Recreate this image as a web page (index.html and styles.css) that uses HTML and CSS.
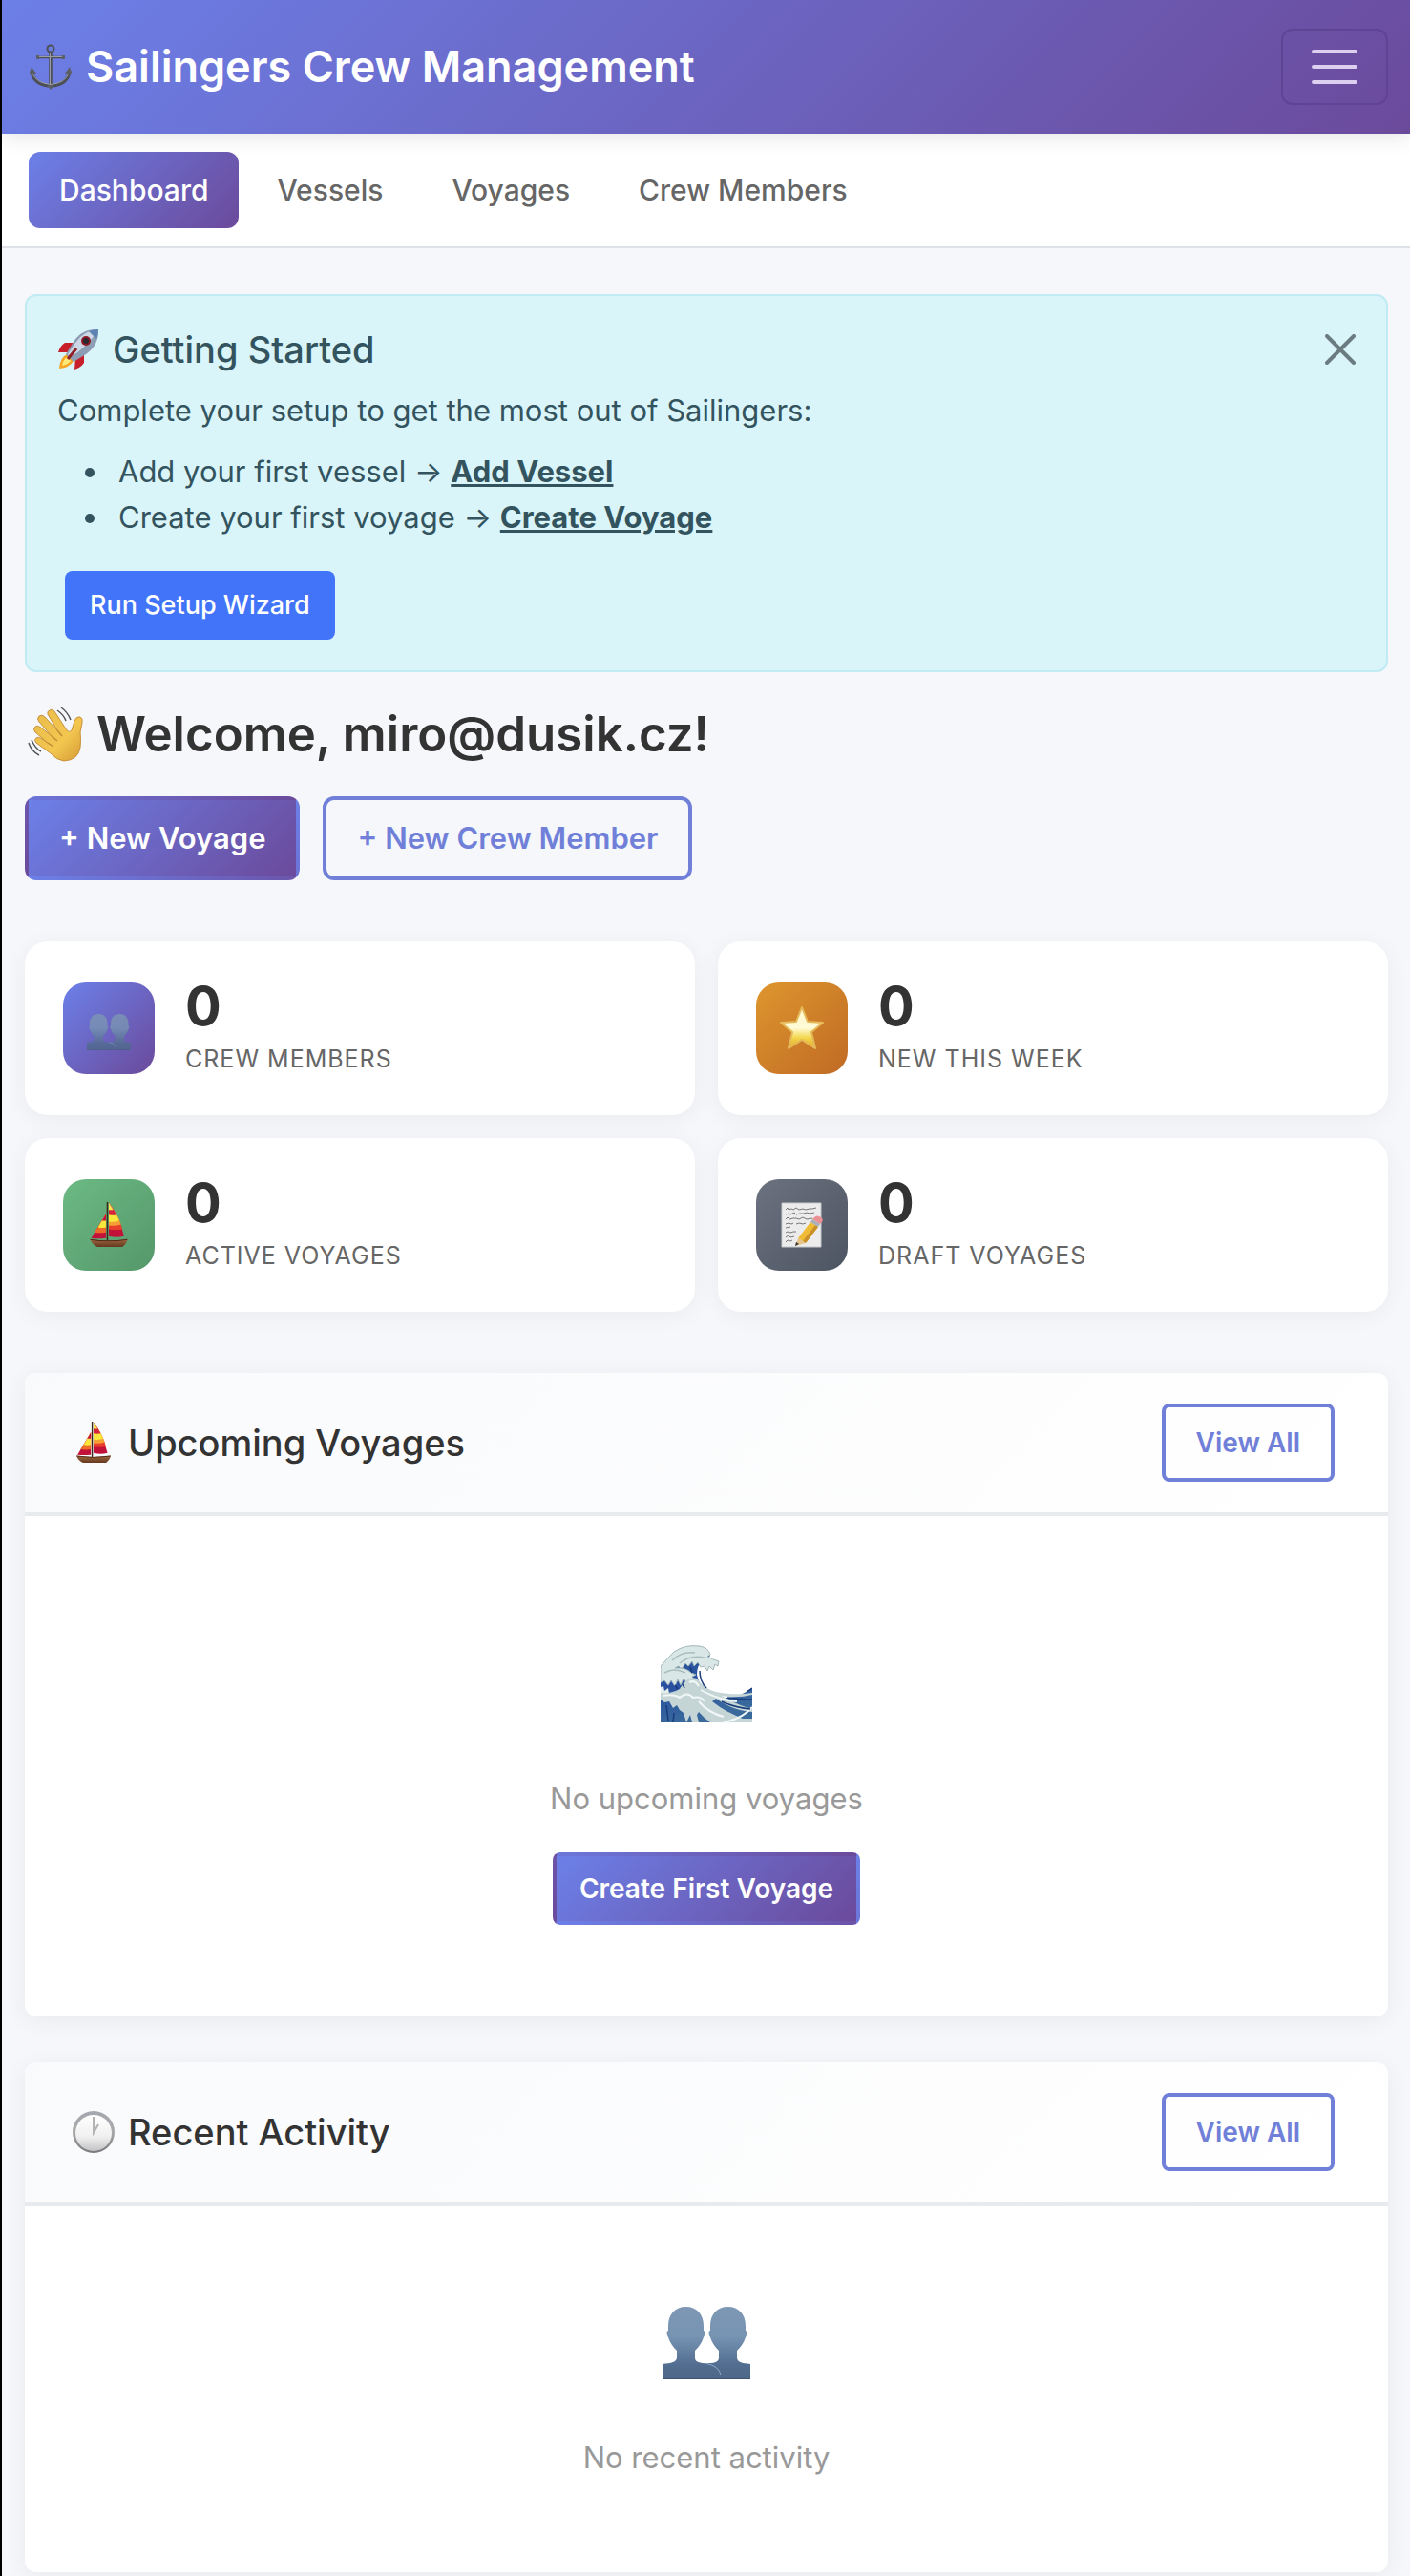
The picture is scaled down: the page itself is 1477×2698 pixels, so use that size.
FILE: index.html
```
<!DOCTYPE html>
<html lang="en">
<head>
  <meta charset="UTF-8">
  <meta name="viewport" content="width=device-width, initial-scale=1.0">
  <title>Sailingers Crew Management</title>
  <link rel="stylesheet" href="styles.css">
</head>
<body>
  <!-- Shared icons -->
  <svg class="icon-defs" aria-hidden="true">
    <defs>
      <linearGradient id="people-fill" x1="0" y1="0" x2="0" y2="76" gradientUnits="userSpaceOnUse">
        <stop offset="0" stop-color="#7d97b4"/>
        <stop offset="0.4" stop-color="#7894b3"/>
        <stop offset="0.8" stop-color="#526d90"/>
        <stop offset="1" stop-color="#4e6788"/>
      </linearGradient>
      <linearGradient id="hull-fill" x1="0" y1="0" x2="0" y2="1">
        <stop offset="0" stop-color="#a06a42"/>
        <stop offset="1" stop-color="#64371d"/>
      </linearGradient>
    </defs>
    <symbol id="icon-people" viewBox="0 0 92 76">
      <path fill="url(#people-fill)" d="M68.500 0C57 0 50 8 50 20V25C48 25 48 29 50 32C52 38 55 42 59 46V53C59 57 56 59 48 59L40 60V76H92V60C83 59 78 58 78 53V46C82 42 85 38 87 32C89 29 89 25 87 25V20C87 8 80 0 68.500 0Z"/>
      <path fill="url(#people-fill)" d="M24.500 0C13 0 6 8 6 20V25C4 25 4 29 6 32C8 38 11 42 15 46V53C15 58 9 59 0 60V76H61C61 67 54 60 42 59C35 58 34 56 34 53V46C38 42 41 38 43 32C45 29 45 25 43 25V20C43 8 36 0 24.500 0Z"/>
      <path d="M46 59.500C54 61 60 65 61 72" fill="none" stroke="#8fb0cc" stroke-width="1"/>
      <path d="M0 75.500H92" stroke="#3f5674" stroke-width="1"/>
    </symbol>
    <symbol id="icon-boat" viewBox="0 0 40 47">
      <path fill="#c3123a" d="M17 12L2 37Q8 38 17 37Z"/>
      <path fill="#f06a28" d="M17 12L5.500 31Q11 32 17 31Z"/>
      <path fill="#fae73c" d="M17 12L9 26Q13 27 17 26Z"/>
      <path fill="#c3123a" d="M17 12L13 19H17Z"/>
      <path fill="#c3123a" d="M20 1Q31 16 35.500 35Q28 37 20 35Z"/>
      <path fill="#e8402c" d="M20 1Q30 14 34 28Q27 29 20 28Z"/>
      <path fill="#f5a034" d="M20 1Q29 12 32.500 23Q26 25 20 24Z"/>
      <path fill="#fae73c" d="M20 1Q28 12 30.500 19Q25 21 20 20Z"/>
      <path fill="#d5233c" d="M20 1Q25 7 28 13Q24 14 20 13Z"/>
      <path fill="#f7ea50" d="M20 1L24.500 8H20Z"/>
      <path d="M18.500 0V42" stroke="#3a2a1c" stroke-width="1.500"/>
      <path fill="url(#hull-fill)" d="M1 38Q19 41 39 38Q39 42 34 46H8Q2 43 1 38Z"/>
      <path d="M1 38.500Q19 41.500 39 38.500" fill="none" stroke="#4d2b17" stroke-width="1"/>
    </symbol>
  </svg>

  <!-- Header section -->
  <header class="topbar">
    <a href="#" class="brand">
      <svg class="brand-icon" viewBox="0 0 44 48" aria-hidden="true">
        <g fill="none" stroke="#4c4f55" stroke-width="3.500">
          <circle cx="22" cy="5" r="3.500" stroke-width="2"/>
          <path d="M22 9V45"/>
          <path d="M8 14H36" stroke-width="2.500"/>
          <path d="M2 28Q4 43 22 44Q40 43 42 28"/>
        </g>
        <g fill="none" stroke="#9a9da3" stroke-width="1">
          <path d="M21.500 9V43M9 13.500H35M3 31Q7 41 22 42.500Q37 41 41 31"/>
        </g>
        <path fill="#5b5e64" d="M0 31L2 24L7 31ZM44 31L42 24L37 31ZM18 43H26L22 48ZM7 12h3v4H7zM34 12h3v4h-3z"/>
      </svg>
      <span>Sailingers Crew Management</span>
    </a>
    <button type="button" class="menu-toggle" aria-label="Toggle navigation">
      <svg viewBox="0 0 60 60" aria-hidden="true">
        <path d="M8 14H52M8 30H52M8 46H52"/>
      </svg>
    </button>
  </header>

  <nav class="tabs">
    <a href="#" class="tab active">Dashboard</a>
    <a href="#" class="tab">Vessels</a>
    <a href="#" class="tab">Voyages</a>
    <a href="#" class="tab">Crew Members</a>
  </nav>

  <main>
    <!-- Onboarding -->
    <section class="alert">
      <button type="button" class="alert-close" aria-label="Close">
        <svg viewBox="0 0 32 32" aria-hidden="true"><path d="M2 2L30 30M30 2L2 30"/></svg>
      </button>
      <h2 class="heading">
        <svg class="heading-icon" viewBox="0 0 44 44" aria-hidden="true">
          <path fill="#c8202b" d="M17 15L8 15Q3 18 1 25L12 25ZM28 27L28 36Q25 41 18 43L19 31Z"/>
          <path fill="#f5a623" d="M10 27Q3 30 2 42Q13 41 17 34Z"/>
          <path fill="#fce97a" d="M11 30Q6 32 5 39Q11 38 14 34Z"/>
          <path fill="#8d9db4" d="M43 1Q26 0 17 14L9 27L17 35L30 27Q44 17 43 1Z"/>
          <path fill="#cdd8e6" d="M43 1Q28 2 19 15L11 27L14 30Q32 19 43 1Z"/>
          <path fill="#5d83b4" d="M43 1Q37 1 33 3L41 11Q43 6 43 1Z"/>
          <circle cx="30" cy="13" r="5" fill="#8e1a24"/>
          <circle cx="30" cy="13" r="3" fill="#2b2730"/>
          <path d="M20 21L11 32" stroke="#8f2028" stroke-width="3"/>
        </svg>
        Getting Started
      </h2>
      <p>Complete your setup to get the most out of Sailingers:</p>
      <ul>
        <li>Add your first vessel → <a href="#">Add Vessel</a></li>
        <li>Create your first voyage → <a href="#">Create Voyage</a></li>
      </ul>
      <button type="button" class="btn-small btn-setup">Run Setup Wizard</button>
    </section>

    <h1 class="welcome">
      <svg viewBox="0 0 60 60" aria-hidden="true">
        <defs>
          <linearGradient id="hand-fill" x1="0" y1="0" x2="1" y2="1">
            <stop offset="0" stop-color="#e9bd4b"/>
            <stop offset="0.6" stop-color="#f3c650"/>
            <stop offset="1" stop-color="#d39a32"/>
          </linearGradient>
        </defs>
        <path fill="url(#hand-fill)" stroke="#c8913a" stroke-width="1" d="M38 58Q30 57 24 50L9 39Q6 36 9 34Q11 32 15 35L21 39L8 28Q5 25 8 22Q10 20 14 23L25 32L12 17Q9 14 12 11Q15 9 18 12L31 26L21 9Q20 6 23 5Q26 3 28 6L41 26Q44 29 46 26L49 16Q51 11 55 12Q58 13 57 18L55 28Q56 35 55 44Q53 57 38 58Z"/>
        <path d="M21 39L27 43M25 32L31 37M31 26L36 32" stroke="#c08a35" stroke-width="1.500"/>
        <path d="M35 2Q42 7 45 15M31 5Q38 10 40 16M1 39Q4 48 12 52M4 36Q8 45 14 48" fill="none" stroke="#55575b" stroke-width="1.500"/>
      </svg>
      Welcome, miro@dusik.cz!
    </h1>
    <div class="actions">
      <a href="#" class="btn btn-primary">+ New Voyage</a>
      <a href="#" class="btn btn-outline">+ New Crew Member</a>
    </div>

    <!-- Stats -->
    <div class="stats">
      <div class="stat-card">
        <div class="stat-icon purple">
          <svg class="stat-people" aria-hidden="true"><use href="#icon-people"/></svg>
        </div>
        <div>
          <div class="stat-number">0</div>
          <div class="stat-label">Crew Members</div>
        </div>
      </div>
      <div class="stat-card">
        <div class="stat-icon orange">
          <svg viewBox="0 0 48 48" aria-hidden="true">
            <defs>
              <linearGradient id="star-fill" x1="0" y1="0" x2="0" y2="1">
                <stop offset="0" stop-color="#fff8cc"/>
                <stop offset="0.5" stop-color="#fffbd8"/>
                <stop offset="0.75" stop-color="#f3d64a"/>
                <stop offset="1" stop-color="#dfa12c"/>
              </linearGradient>
            </defs>
            <path fill="url(#star-fill)" stroke="#e5b95a" stroke-width="2" stroke-linejoin="round" d="M24 2L30 17L46 18L34 28L38 45L24 36L10 45L14 28L2 18L18 17Z"/>
          </svg>
        </div>
        <div>
          <div class="stat-number">0</div>
          <div class="stat-label">New This Week</div>
        </div>
      </div>
      <div class="stat-card">
        <div class="stat-icon green">
          <svg aria-hidden="true"><use href="#icon-boat"/></svg>
        </div>
        <div>
          <div class="stat-number">0</div>
          <div class="stat-label">Active Voyages</div>
        </div>
      </div>
      <div class="stat-card">
        <div class="stat-icon gray">
          <svg viewBox="0 0 48 48" aria-hidden="true">
            <path fill="#ececec" stroke="#c6c8cb" stroke-width="1" d="M3 1H44V47H3Z"/>
            <path fill="none" stroke="#777" stroke-width="1" d="M7 8l2-2 1 2 3-1 2 1 3-2 3 2 4-1 3 1 4-1 3 0 4-1M7 13l3-1 2 1 4-2 2 2 4-1 4 0 3-1 3 1 5-1M7 18l2-2 2 2 4-1 3 0 3 1 4-2 4 2 6-1M7 23l3-1 3 1 2-1M18 23l3-1 4 1 3-1M7 27l5-1M7 32l2-1 3 1 3-1 3 0M7 37l3-2 2 2 4-1M7 42l2-2 3 1 2-1"/>
            <path fill="#f0bc35" d="M33 21L41 26L28 43L20 38Z"/>
            <path fill="#c9902a" d="M38 24L41 26L28 43L25 41Z"/>
            <path fill="#a9b0b8" d="M35 18L43 23L41 26L33 21Z"/>
            <path fill="#e99095" d="M37 16Q40 13 44 16Q47 18 45 21L43 23L35 18Z"/>
            <path fill="#e6c48c" d="M20 38L28 43L17 46Z"/>
            <path fill="#333" d="M18 42L21 44L17 46Z"/>
          </svg>
        </div>
        <div>
          <div class="stat-number">0</div>
          <div class="stat-label">Draft Voyages</div>
        </div>
      </div>
    </div>

    <!-- Voyages -->
    <section class="card">
      <div class="card-header">
        <h2 class="heading">
          <svg class="heading-icon" aria-hidden="true"><use href="#icon-boat"/></svg>
          Upcoming Voyages
        </h2>
        <a href="#" class="btn-small btn-outline">View All</a>
      </div>
      <div class="empty empty-voyages">
        <svg class="empty-icon" viewBox="0 0 96 96" aria-hidden="true">
          <defs>
            <linearGradient id="sea-fill" x1="0" y1="0" x2="0.300" y2="1">
              <stop offset="0" stop-color="#315f9e"/>
              <stop offset="0.500" stop-color="#2950a0"/>
              <stop offset="1" stop-color="#3a6a9c"/>
            </linearGradient>
          </defs>
          <path fill="url(#sea-fill)" d="M0 30Q14 10 36 9Q48 7 52 18L46 24Q38 26 38 38Q42 56 58 62Q80 64 96 52V88H0Z"/>
          <!-- crest -->
          <path fill="#d9e7e6" stroke="#a3b7bb" stroke-width="1" d="M0 29Q8 20 14 14Q26 6 40 8Q50 9 52 17L49 19Q54 22 61 24L60 29L57 27L55 33L51 29L49 34L46 29L42 30L39 25L35 29L33 24L29 29L26 26L22 32L19 29L15 31Q26 30 32 36L37 38L33 40L35 45L29 42L28 47L24 42L21 49L18 43L15 50L11 44L8 49L4 44L0 46Z"/>
          <path fill="none" stroke="#a9bdbd" stroke-width="1.500" d="M12 23Q22 13 36 15M20 26Q30 17 46 20M4 36Q14 30 26 36"/>
          <path fill="#e4eeec" d="M0 51L3 50L4 55L8 52L9 58L6 59L8 64L0 60Z"/>
          <!-- inner swell -->
          <path fill="#c5d5d6" d="M0 57Q12 58 20 53Q28 38 38 42Q46 53 58 56Q78 60 96 57V59Q80 63 64 60Q80 70 96 74V77Q74 75 58 63L54 66Q66 76 86 84L96 84V88H52Q46 84 40 77L38 80L40 88H33L31 80L27 88L24 78L20 75L17 70L13 73L9 66L4 67L0 64Z"/>
          <path fill="none" stroke="#f1f7f6" stroke-width="2" d="M2 60Q14 58 20 62Q28 55 34 62Q42 60 46 66M30 46Q36 43 40 50M42 54Q60 64 80 66M40 66Q50 78 66 82M66 88Q86 84 96 72"/>
          <path fill="none" stroke="#173c7c" stroke-width="1.500" d="M6 70L8 86M14 78L13 88M64 66Q76 72 94 74M70 62Q82 64 96 64M15 49L18 53M23 48L25 52M31 30L33 36M41 34Q41 45 48 52M90 56L96 52"/>
        </svg>
        <p>No upcoming voyages</p>
        <a href="#" class="btn-small btn-primary">Create First Voyage</a>
      </div>
    </section>

    <!-- Activity -->
    <section class="card">
      <div class="card-header">
        <h2 class="heading">
          <svg class="heading-icon" viewBox="0 0 44 44" aria-hidden="true">
            <defs>
              <linearGradient id="clock-rim" x1="0" y1="0" x2="0" y2="1">
                <stop offset="0" stop-color="#a5a7af"/>
                <stop offset="0.500" stop-color="#a9a9ab"/>
                <stop offset="1" stop-color="#77787c"/>
              </linearGradient>
              <linearGradient id="clock-face" x1="0" y1="0" x2="0" y2="1">
                <stop offset="0" stop-color="#ffffff"/>
                <stop offset="0.600" stop-color="#f0f0f0"/>
                <stop offset="1" stop-color="#c4c4c6"/>
              </linearGradient>
            </defs>
            <circle cx="22" cy="22" r="22" fill="url(#clock-rim)"/>
            <circle cx="22" cy="23" r="19" fill="url(#clock-face)"/>
            <path d="M22 6V23L27 14" fill="none" stroke="#b3b3b6" stroke-width="2"/>
          </svg>
          Recent Activity
        </h2>
        <a href="#" class="btn-small btn-outline">View All</a>
      </div>
      <div class="empty">
        <svg class="empty-icon empty-people" aria-hidden="true"><use href="#icon-people"/></svg>
        <p>No recent activity</p>
      </div>
    </section>
  </main>
</body>
</html>
```
FILE: styles.css
```
* {
  box-sizing: border-box;
}
body {
  margin: 0;
  min-height: 100vh;
  border-left: 2px solid #000;
  background-color: #f5f7fb;
  color: #333;
  font-family: Inter, "Liberation Sans", sans-serif;
  font-size: 31px;
  line-height: 48px;
}
h1,
h2,
p,
ul {
  margin: 0;
}
button {
  font-family: inherit;
  cursor: pointer;
}
a {
  text-decoration: none;
}
svg {
  flex-shrink: 0;
}
.icon-defs {
  position: absolute;
  width: 0;
  height: 0;
}

/* Header */
.topbar {
  position: relative;
  display: flex;
  align-items: center;
  justify-content: space-between;
  padding: 30px 23px 30px 28px;
  background: linear-gradient(135deg, #6c80e8 0%, #6b4a9b 100%);
  box-shadow: 0 4px 20px rgba(0, 0, 0, 0.1);
}
.brand {
  display: flex;
  align-items: center;
  gap: 14px;
  color: #fff;
  font-size: 45px;
  font-weight: 600;
}
.brand-icon {
  width: 46px;
  height: 48px;
}
.menu-toggle {
  display: flex;
  align-items: center;
  justify-content: center;
  width: 112px;
  height: 80px;
  padding: 0;
  background: none;
  border: 2px solid #5f4494;
  border-radius: 12px;
}
.menu-toggle svg {
  width: 60px;
  height: 60px;
  fill: none;
  stroke: #dccff0;
  stroke-width: 4;
  stroke-linecap: round;
}

/* Tabs */
.tabs {
  display: flex;
  gap: 8px;
  padding: 19px 28px;
  background-color: #fff;
  border-bottom: 2px solid #dee2e6;
}
.tab {
  padding: 16px 32px;
  border-radius: 12px;
  color: #666;
  font-size: 30px;
  font-weight: 500;
}
.tab.active {
  color: #fff;
  background: linear-gradient(135deg, #6c80e8 0%, #6b4a9b 100%);
}

main {
  padding: 48px 23px 0 24px;
}
.heading {
  display: flex;
  align-items: center;
  gap: 14px;
  font-size: 38px;
  font-weight: 500;
}
.heading-icon {
  width: 44px;
  height: 44px;
}

/* Alert */
.alert {
  position: relative;
  padding: 32px;
  background-color: #daf5fa;
  border: 2px solid #c1ebf2;
  border-radius: 12px;
  color: #33545e;
}
.alert p,
.alert ul {
  margin-top: 16px;
}
.alert ul {
  padding-left: 56px;
}
.alert li {
  padding-left: 8px;
}
.alert a {
  color: #33545e;
  font-weight: 700;
  text-decoration: underline;
}
.alert-close {
  position: absolute;
  top: 40px;
  right: 32px;
  padding: 0;
  background: none;
  border: none;
}
.alert-close svg {
  display: block;
  width: 32px;
  height: 32px;
  fill: none;
  stroke: #6b7c81;
  stroke-width: 4;
  stroke-linecap: round;
}

/* Buttons */
.btn,
.btn-small {
  display: inline-block;
  border: 4px solid transparent;
  font-weight: 600;
}
.btn {
  padding: 16px 32px;
  border-radius: 12px;
}
.btn-small {
  padding: 10px 24px;
  border-radius: 8px;
  font-size: 28px;
}
.btn-primary {
  color: #fff;
  background: linear-gradient(135deg, #6c80e8 0%, #6b4a9b 100%);
}
.btn-outline {
  color: #7080d8;
  border-color: #7080d8;
}
.btn-setup {
  margin: 32px 8px 0;
  color: #fff;
  background-color: #4174f8;
  border: none;
  padding: 12px 26px;
  font-size: 27px;
  font-weight: 500;
  line-height: 48px;
}

/* Welcome */
.welcome {
  display: flex;
  align-items: center;
  gap: 12px;
  margin: 32px 0;
  padding-left: 3px;
  font-size: 51px;
  font-weight: 600;
  line-height: 66px;
}
.welcome svg {
  width: 60px;
  height: 60px;
}
.actions {
  display: flex;
  gap: 24px;
}

/* Stats */
.stats {
  display: grid;
  grid-template-columns: 1fr 1fr;
  gap: 24px;
  margin: 64px 0;
}
.stat-card {
  display: flex;
  align-items: center;
  gap: 32px;
  padding: 40px;
  background-color: #fff;
  border-radius: 24px;
  box-shadow: 0 4px 24px rgba(0, 0, 0, 0.05);
}
.stat-icon {
  display: flex;
  align-items: center;
  justify-content: center;
  width: 96px;
  height: 96px;
  border-radius: 24px;
}
.stat-icon svg {
  width: 48px;
  height: 48px;
}
.stat-icon .stat-people {
  width: 46px;
  height: 38px;
  margin-top: 8px;
  opacity: 0.8;
}
.purple {
  background: linear-gradient(135deg, #6c80e8 0%, #6b4a9b 100%);
}
.orange {
  background: linear-gradient(135deg, #de962e 0%, #c06a24 100%);
}
.green {
  background: linear-gradient(135deg, #6cba84 0%, #55976a 100%);
}
.gray {
  background: linear-gradient(135deg, #6c727f 0%, #4d5462 100%);
}
.stat-number {
  font-size: 56px;
  font-weight: 700;
  line-height: 56px;
}
.stat-label {
  margin-top: 8px;
  color: #666;
  font-size: 25px;
  letter-spacing: 1px;
  line-height: 38px;
  text-transform: uppercase;
}

/* Cards */
.card {
  background-color: #fff;
  border-radius: 12px;
  box-shadow: 0 4px 24px rgba(0, 0, 0, 0.06);
  overflow: hidden;
}
.card + .card {
  margin-top: 48px;
}
.card-header {
  display: flex;
  align-items: center;
  justify-content: space-between;
  padding: 32px 56px 32px 50px;
  background: linear-gradient(135deg, #f9fafc 0%, #fff 100%);
  border-bottom: 4px solid #e8ebee;
}
.card-header .btn-small {
  padding: 13px 32px;
}
.empty {
  display: flex;
  flex-direction: column;
  align-items: center;
  padding: 96px 48px;
  color: #999;
}
.empty-voyages {
  padding-top: 128px;
}
.empty-icon {
  width: 96px;
  height: 96px;
  margin-bottom: 48px;
}
.empty-people {
  padding: 0 2px;
}
.empty .btn-small {
  margin-top: 32px;
}
```
